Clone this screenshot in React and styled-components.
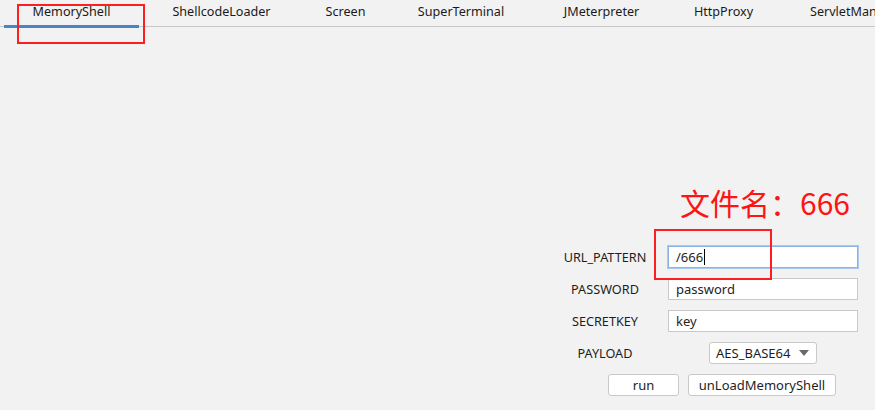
import React from "react";
import styled, { createGlobalStyle } from "styled-components";

const GlobalStyle = createGlobalStyle`
  html, body {
    margin: 0;
    padding: 0;
    background: #f2f2f2;
  }
  body {
    font-family: "Noto Sans", "Noto Sans CJK SC", sans-serif;
    font-size: 13px;
    color: #1e1e1e;
  }
`;

const Page = styled.div`
  position: relative;
  width: 875px;
  height: 410px;
  overflow: hidden;
  background: #f2f2f2;
`;

const TabBar = styled.div`
  display: flex;
  align-items: flex-start;
  height: 27px;
  box-sizing: border-box;
  padding-left: 4px;
  border-bottom: 1px solid #c8c8c8;
  white-space: nowrap;
`;

const Tab = styled.div`
  flex: none;
  width: ${(p) => (p.$w ? `${p.$w}px` : "auto")};
  padding-left: ${(p) => (p.$w ? 0 : 31)}px;
  height: 28px;
  box-sizing: border-box;
  display: flex;
  align-items: center;
  justify-content: ${(p) => (p.$w ? "center" : "flex-start")};
  padding-bottom: 3px;
  border-bottom: 3px solid ${(p) => (p.$active ? "#4a84c4" : "transparent")};
  font-size: 12.6px;
  color: #1a1a1a;
`;

const Content = styled.div`
  display: flex;
  justify-content: flex-end;
  padding: 219px 17px 0 0;
`;

const Form = styled.div`
  display: grid;
  grid-template-columns: 96px 190px;
  grid-auto-rows: 22px;
  column-gap: 15px;
  row-gap: 10px;
`;

const Label = styled.div`
  display: flex;
  align-items: center;
  justify-content: center;
  font-size: 12.7px;
  color: #1e1e1e;
`;

const Field = styled.div`
  display: flex;
  align-items: center;
  box-sizing: border-box;
  height: 22px;
  padding-left: 7px;
  background: #ffffff;
  border: 1px solid ${(p) => (p.$focused ? "#89b3e6" : "#c9c9c9")};
  box-shadow: ${(p) => (p.$focused ? "0 0 0 1px #a9c9ef" : "none")};
  font-size: 13px;
  color: #1e1e1e;
`;

const Caret = styled.span`
  display: inline-block;
  width: 1px;
  height: 16px;
  margin-left: 1px;
  background: #000;
`;

const Combo = styled.div`
  justify-self: center;
  width: 108px;
  box-sizing: border-box;
  display: flex;
  align-items: center;
  justify-content: space-between;
  padding: 0 7px 0 6px;
  background: #ffffff;
  border: 1px solid #c9c9c9;
  border-radius: 3px;
  font-size: 13px;
  color: #1e1e1e;
`;

const ButtonRow = styled.div`
  grid-column: 1 / -1;
  display: flex;
  gap: 9px;
  padding-left: 51px;
`;

const Button = styled.div`
  width: ${(p) => p.$w}px;
  box-sizing: border-box;
  display: flex;
  align-items: center;
  justify-content: center;
  background: #ffffff;
  border: 1px solid #c9c9c9;
  border-radius: 3px;
  font-size: 13px;
  color: #1e1e1e;
`;

const Mark = styled.div`
  position: absolute;
  left: ${(p) => p.$x}px;
  top: ${(p) => p.$y}px;
  width: ${(p) => p.$w}px;
  height: ${(p) => p.$h}px;
  box-sizing: border-box;
  border: 2px solid #fb1f1f;
  pointer-events: none;
`;

const Note = styled.div`
  position: absolute;
  left: 680px;
  top: 184px;
  font-family: "Noto Sans CJK SC", "Noto Sans", sans-serif;
  font-size: 30px;
  line-height: 36px;
  color: #ff1414;
  white-space: nowrap;
`;

const Arrow = () => (
  <svg width="10" height="6" viewBox="0 0 10 6">
    <path d="M0 0 H10 L5 6 Z" fill="#6a6a6a" />
  </svg>
);

const tabs = [
  { name: "MemoryShell", w: 135, active: true },
  { name: "ShellcodeLoader", w: 165 },
  { name: "Screen", w: 83 },
  { name: "SuperTerminal", w: 148 },
  { name: "JMeterpreter", w: 133 },
  { name: "HttpProxy", w: 111 },
  { name: "ServletManage" },
];

export default function App() {
  return (
    <Page>
      <GlobalStyle />
      <TabBar>
        {tabs.map((t) => (
          <Tab key={t.name} $w={t.w} $active={t.active}>
            {t.name}
          </Tab>
        ))}
      </TabBar>
      <Content>
        <Form>
          <Label>URL_PATTERN</Label>
          <Field $focused>
            /666
            <Caret />
          </Field>
          <Label>PASSWORD</Label>
          <Field>password</Field>
          <Label>SECRETKEY</Label>
          <Field>key</Field>
          <Label>PAYLOAD</Label>
          <Combo>
            <span>AES_BASE64</span>
            <Arrow />
          </Combo>
          <ButtonRow>
            <Button $w={71}>run</Button>
            <Button $w={148}>unLoadMemoryShell</Button>
          </ButtonRow>
        </Form>
      </Content>
      <Mark $x={17} $y={4} $w={128} $h={40} />
      <Mark $x={654} $y={229} $w={118} $h={51} />
      <Note>文件名：666</Note>
    </Page>
  );
}
